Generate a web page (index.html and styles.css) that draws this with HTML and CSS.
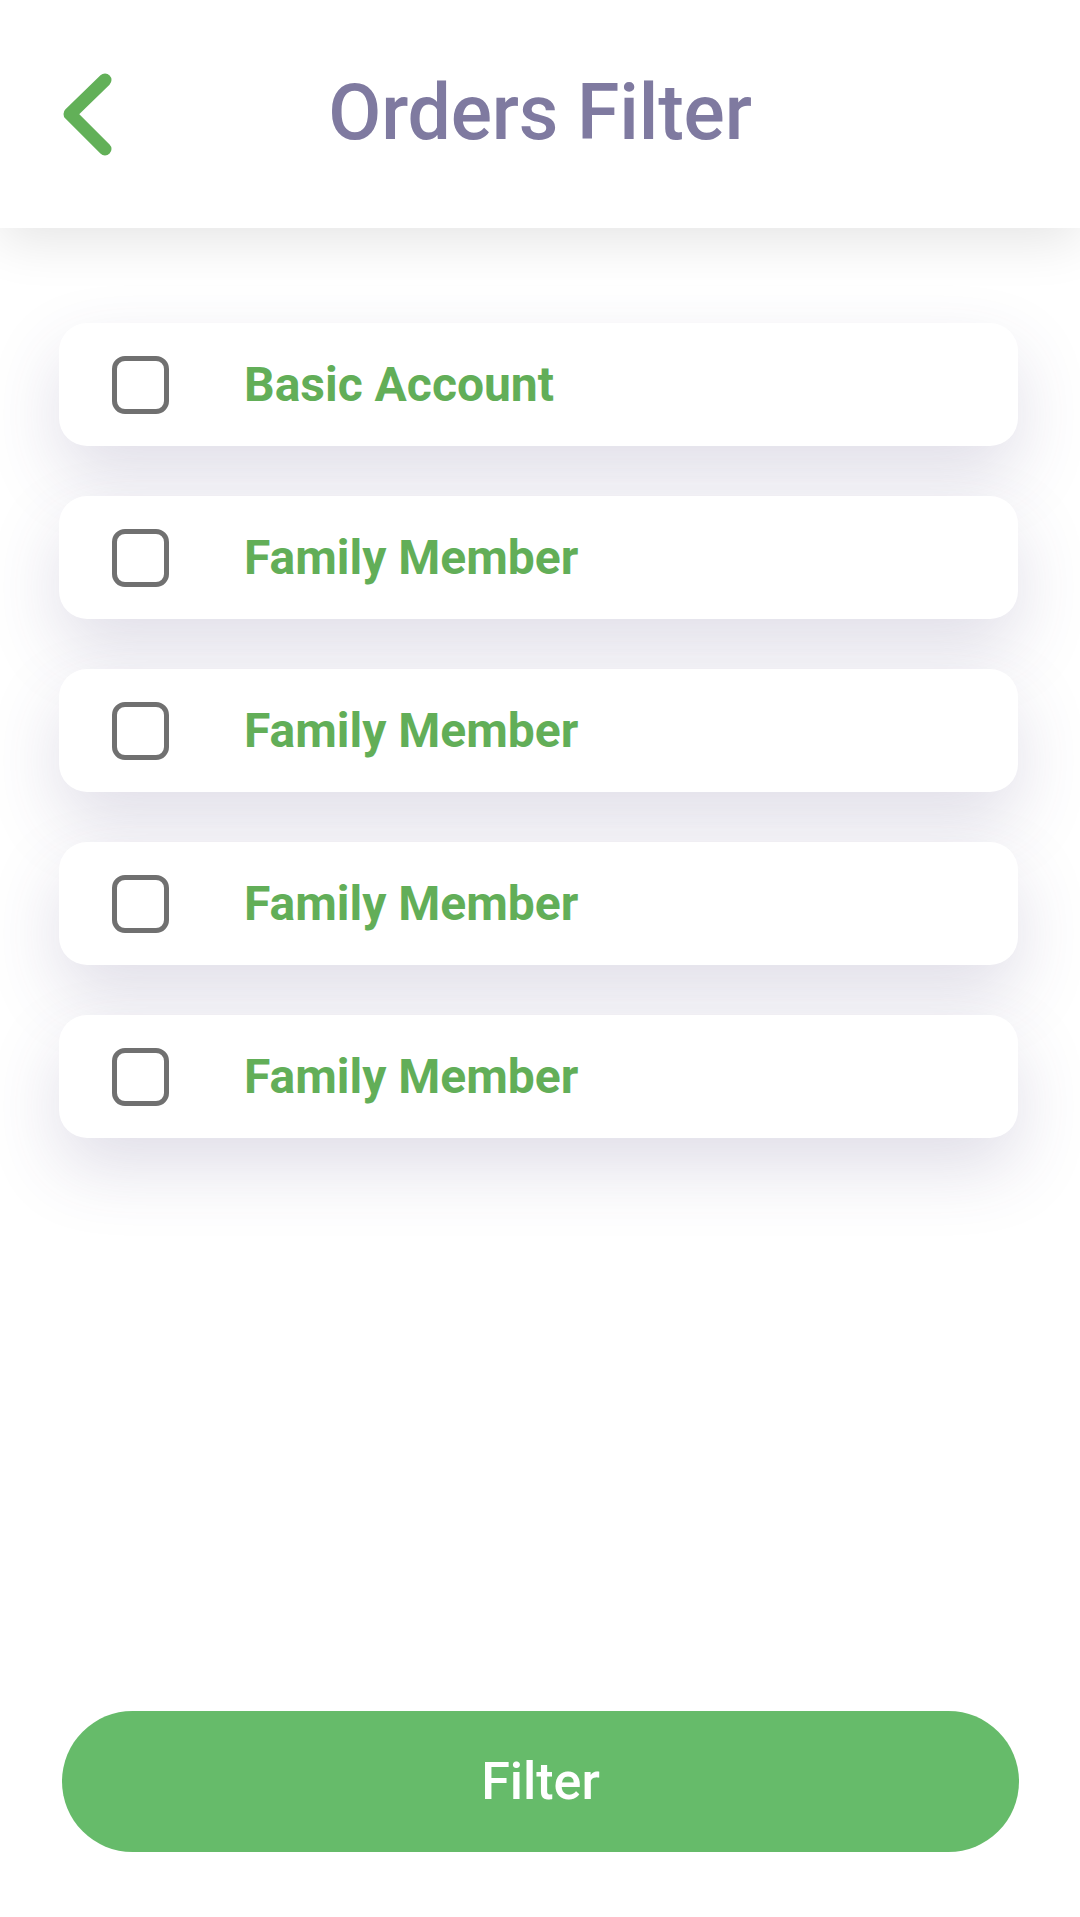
FILE: index.html
```html
<!DOCTYPE html>
<html lang="en">
<head>
<meta charset="utf-8">
<title>Orders Filter</title>
<link rel="stylesheet" href="styles.css">
</head>
<body>
<div class="screen">
  <header class="topbar">
    <button class="back" aria-label="Back">
      <svg width="100" height="110" viewBox="40 60 100 110">
        <path d="M105 80 L70 114 L105 149" fill="none" stroke="#62b058" stroke-width="13" stroke-linecap="round" stroke-linejoin="round"/>
      </svg>
    </button>
    <h1 class="title">Orders Filter</h1>
  </header>
  <main class="list">
    <label class="card"><span class="box"></span><span class="label">Basic Account</span></label>
    <label class="card"><span class="box"></span><span class="label">Family Member</span></label>
    <label class="card"><span class="box"></span><span class="label">Family Member</span></label>
    <label class="card"><span class="box"></span><span class="label">Family Member</span></label>
    <label class="card"><span class="box"></span><span class="label">Family Member</span></label>
  </main>
  <div class="footer">
    <button class="filter-btn">Filter</button>
  </div>
</div>
</body>
</html>
```

FILE: styles.css
```css
* { box-sizing: border-box; }
html, body { margin: 0; padding: 0; background: #fff; }
body { font-family: Roboto, "Noto Sans", "Liberation Sans", sans-serif; }
.screen {
  width: 1080px;
  height: 1917px;
  display: flex;
  flex-direction: column;
  background: #fff;
  overflow: hidden;
}
.topbar {
  position: relative;
  z-index: 2;
  height: 228px;
  flex: none;
  background: #fff;
  display: flex;
  align-items: center;
  justify-content: center;
  box-shadow: 0 12px 50px rgba(0,0,0,0.11);
}
.back {
  position: absolute;
  left: 40px;
  top: 60px;
  width: 100px;
  height: 110px;
  padding: 0;
  border: 0;
  background: none;
}
.back svg { display: block; }
.title {
  margin: 0;
  margin-top: -2px;
  font-size: 77px;
  font-weight: 500;
  color: #7f7aa0;
  letter-spacing: -0.2px;
}
.list {
  position: relative;
  z-index: 1;
  display: flex;
  flex-direction: column;
  gap: 50px;
  padding: 95px 62px 0 59px;
}
.card {
  height: 123px;
  background: #fff;
  border-radius: 28px;
  display: flex;
  align-items: center;
  padding-left: 53px;
  box-shadow: 0 30px 70px rgba(70,60,120,0.17);
}
.box {
  width: 57px;
  height: 58px;
  border: 5.5px solid #707070;
  border-radius: 13px;
  flex: none;
}
.label {
  margin-left: 75px;
  font-size: 48px;
  font-weight: 700;
  color: #62ae58;
}
.footer {
  margin-top: auto;
  padding: 0 61px 65px 62px;
}
.filter-btn {
  width: 100%;
  height: 141px;
  border: 0;
  border-radius: 71px;
  background: #66bb6a;
  color: #fff;
  font-family: Roboto, "Noto Sans", sans-serif;
  font-size: 52px;
  font-weight: 500;
  padding: 0;
}
```
